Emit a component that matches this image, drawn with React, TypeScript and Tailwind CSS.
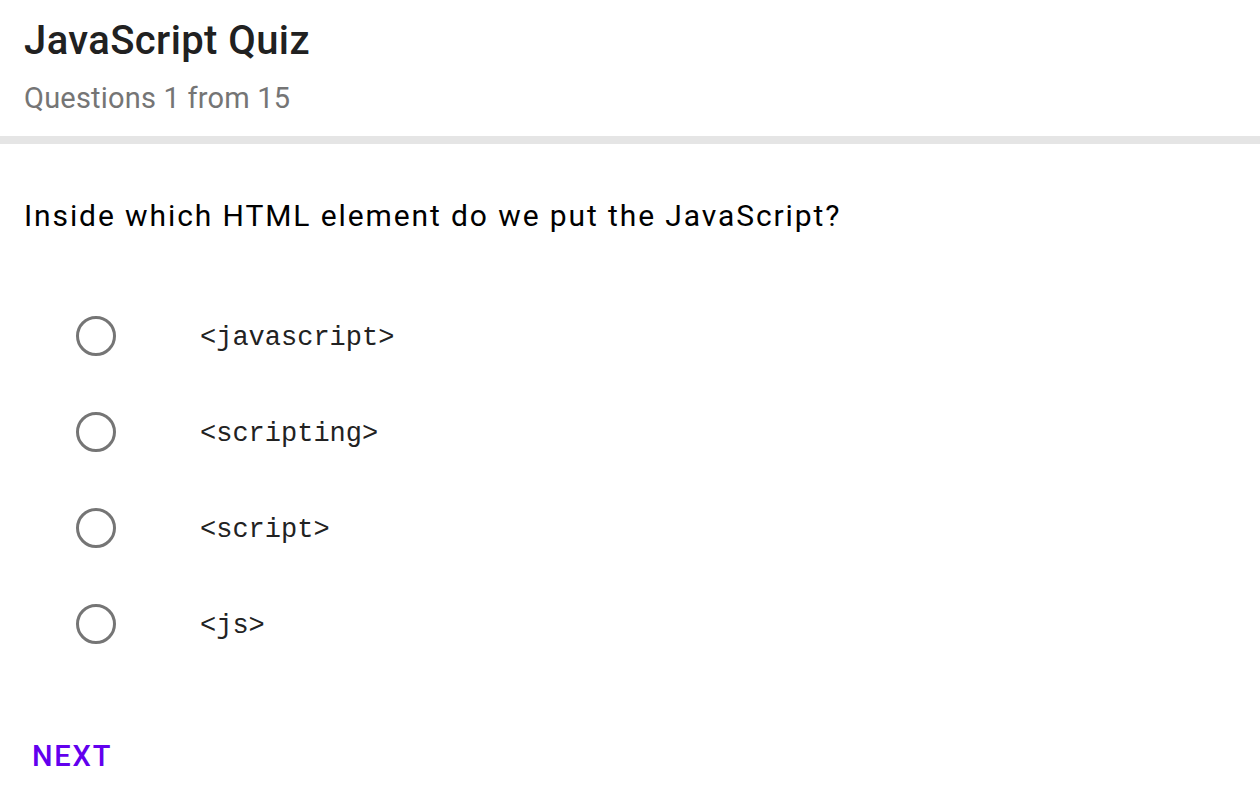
import React from "react";

const options = ["<javascript>", "<scripting>", "<script>", "<js>"];

export default function App() {
  return (
    <div className="min-h-screen bg-white" style={{ fontFamily: "Roboto, 'Liberation Sans', sans-serif" }}>
      <div className="px-6 pt-[14px] pb-[18px]">
        <h1 className="text-[40px] leading-[54px] font-medium text-[#212121] tracking-[0.4px]">JavaScript Quiz</h1>
        <p className="text-[29px] leading-[40px] text-[#757575] mt-[10px] tracking-[0.2px]">Questions 1 from 15</p>
      </div>
      <div className="h-2 bg-[#e5e5e5]" />
      <div className="px-6 pt-[52px]">
        <p className="text-[30px] leading-[40px] text-black tracking-[1.9px]">
          Inside which HTML element do we put the JavaScript?
        </p>
      </div>
      <div className="mt-[52px] flex flex-col pl-[76px]">
        {options.map((o) => (
          <label key={o} className="flex items-center h-[96px]">
            <span className="w-10 h-10 rounded-full border-[3px] border-[#757575] shrink-0" />
            <span
              className="ml-[84px] pt-[4px] text-[27px] text-[#222222]"
              style={{ fontFamily: "'Liberation Mono', 'Courier New', monospace" }}
            >
              {o}
            </span>
          </label>
        ))}
      </div>
      <div className="px-8 mt-[64px]">
        <button className="text-[29px] font-medium tracking-[1.8px] text-[#6200ee] leading-[40px]">NEXT</button>
      </div>
    </div>
  );
}
